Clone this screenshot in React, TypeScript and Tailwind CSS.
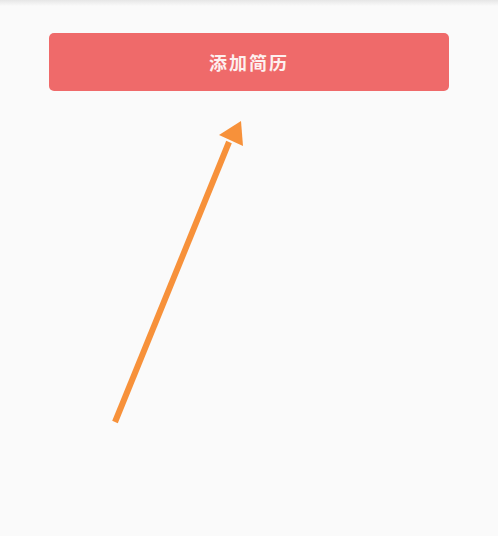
export default function App() {
  return (
    <div className="relative h-[536px] w-[498px] overflow-hidden bg-[#fafafa]">
      <div className="h-[6px] bg-gradient-to-b from-[#e6e6e6] to-[#fafafa]" />
      <div className="px-[49px] pt-[27px]">
        <button
          type="button"
          className="flex h-[58px] w-full items-center justify-center rounded-[5px] bg-[#ef6a6a] text-[18px] font-bold tracking-[2px] text-[#fdf0ef]"
          style={{ fontFamily: '"Noto Sans CJK SC", sans-serif' }}
        >
          添加简历
        </button>
      </div>
      {/* annotation arrow */}
      <svg
        className="pointer-events-none absolute left-0 top-0"
        width="498"
        height="536"
        viewBox="0 0 498 536"
      >
        <line x1="115" y1="422" x2="229" y2="142" stroke="#f7913a" strokeWidth="6" />
        <polygon points="241,121 219,135 243,146" fill="#f7913a" />
      </svg>
    </div>
  );
}
